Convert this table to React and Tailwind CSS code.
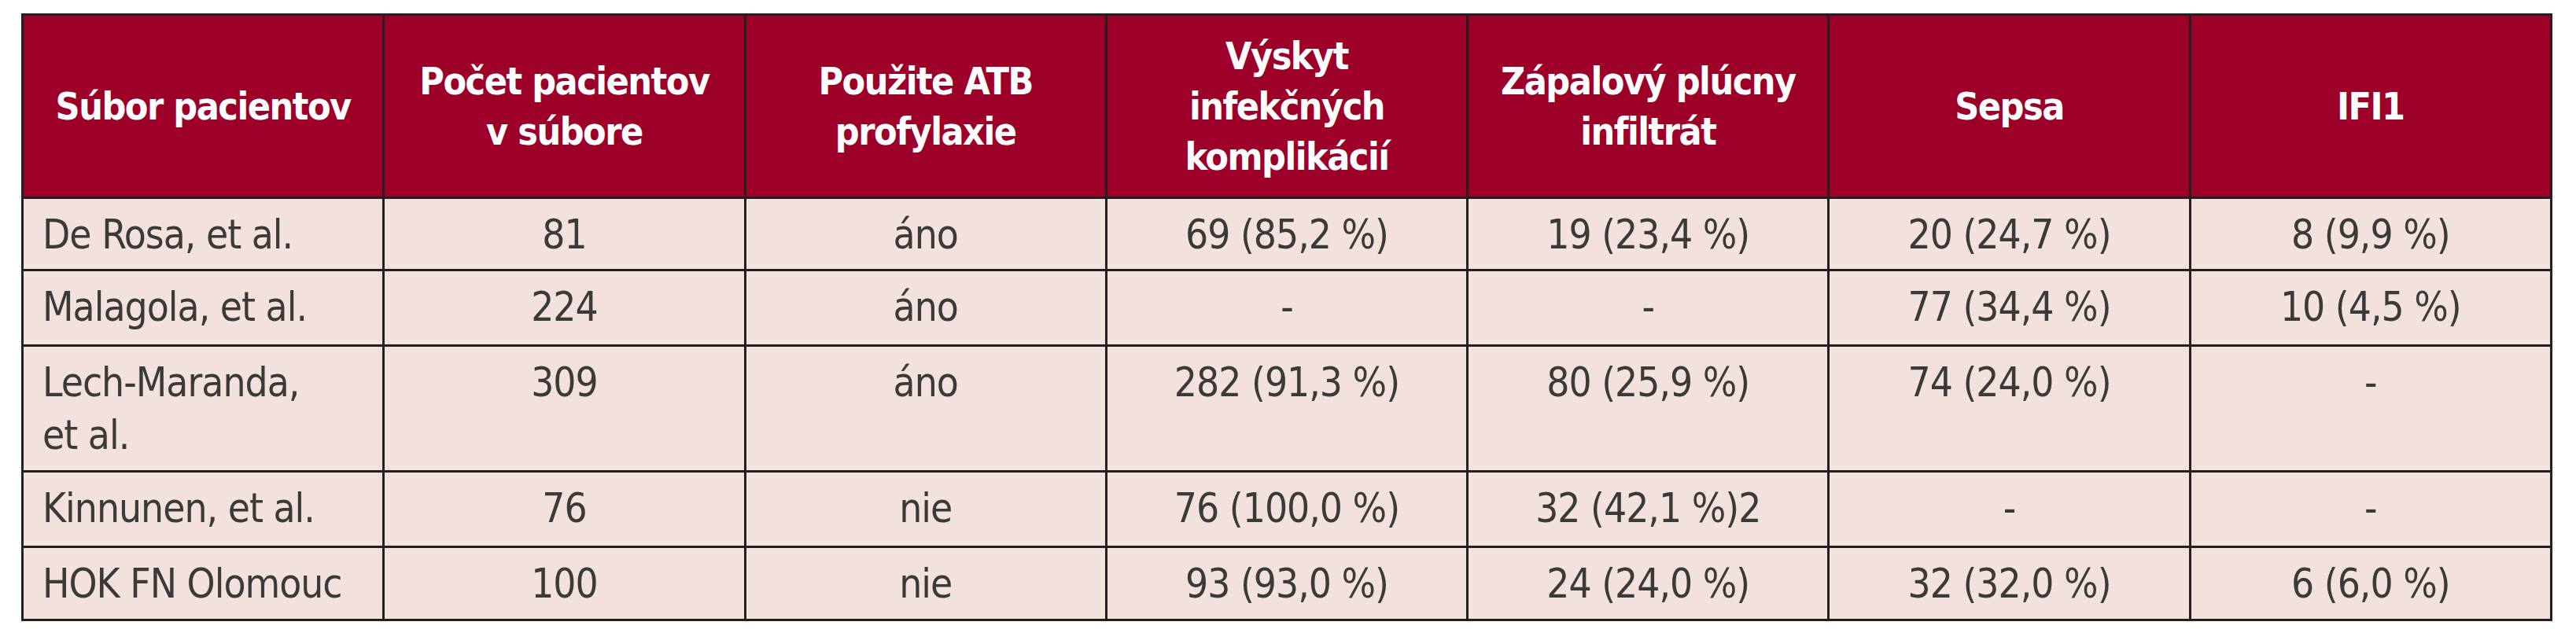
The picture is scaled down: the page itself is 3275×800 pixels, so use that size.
import React from "react";

const header = [
  ["Súbor pacientov"],
  ["Počet pacientov", "v súbore"],
  ["Použite ATB", "profylaxie"],
  ["Výskyt", "infekčných", "komplikácií"],
  ["Zápalový plúcny", "infiltrát"],
  ["Sepsa"],
  ["IFI1"],
];

const rows = [
  { h: "h-[92px]", cells: [["De Rosa, et al."], "81", "áno", "69 (85,2 %)", "19 (23,4 %)", "20 (24,7 %)", "8 (9,9 %)"] },
  { h: "h-[96px]", cells: [["Malagola, et al."], "224", "áno", "-", "-", "77 (34,4 %)", "10 (4,5 %)"] },
  { h: "h-[160px]", cells: [["Lech-Maranda,", "et al."], "309", "áno", "282 (91,3 %)", "80 (25,9 %)", "74 (24,0 %)", "-"] },
  { h: "h-[96px]", cells: [["Kinnunen, et al."], "76", "nie", "76 (100,0 %)", "32 (42,1 %)2", "-", "-"] },
  { h: "h-[93px]", cells: [["HOK FN Olomouc"], "100", "nie", "93 (93,0 %)", "24 (24,0 %)", "32 (32,0 %)", "6 (6,0 %)"] },
];

function Lines({ lines }) {
  return lines.map((l, j) => (
    <React.Fragment key={j}>
      {j > 0 && <br />}
      {l}
    </React.Fragment>
  ));
}

export default function App() {
  return (
    <div className="bg-white w-[3275px] h-[800px] pt-[17px] pl-[27px] font-['DejaVu_Sans_Condensed','DejaVu_Sans',sans-serif] [font-stretch:condensed]">
      <table className="border-collapse table-fixed w-[3218px]">
        <colgroup>
          {header.map((_, i) => (
            <col key={i} className="w-[459px]" />
          ))}
        </colgroup>
        <thead>
          <tr className="h-[233px] bg-[#9c0029]">
            {header.map((lines, i) => (
              <th
                key={i}
                className="border-[3px] border-[#231f20] text-white font-bold text-[48px] leading-[64px] tracking-[-1.5px] align-middle text-center p-0"
              >
                <Lines lines={lines} />
              </th>
            ))}
          </tr>
        </thead>
        <tbody>
          {rows.map((r, ri) => (
            <tr key={ri} className={r.h}>
              {r.cells.map((c, ci) => (
                <td
                  key={ci}
                  className={
                    "border-[3px] border-[#231f20] bg-[#f2e1dc] text-[#3a3a3a] text-[51px] leading-[67px] tracking-[-1px] align-top pt-[12px] pb-0 " +
                    (ci === 0 ? "text-left pl-[24px] pr-0" : "text-center px-0")
                  }
                >
                  {Array.isArray(c) ? <Lines lines={c} /> : c}
                </td>
              ))}
            </tr>
          ))}
        </tbody>
      </table>
    </div>
  );
}
